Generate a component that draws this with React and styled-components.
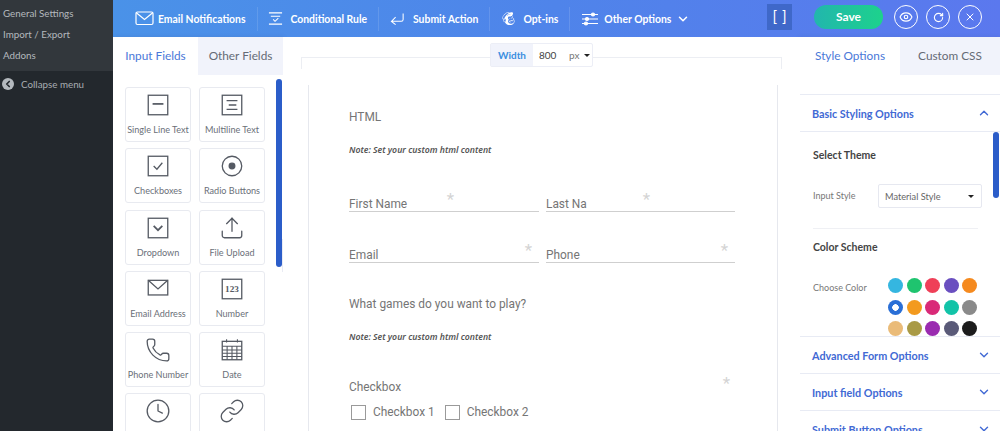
import React from 'react';
import styled, { createGlobalStyle } from 'styled-components';
import { FaMailchimp } from 'react-icons/fa';
import { ChevronDown, ChevronUp, ChevronLeft, Eye, RotateCw, X, Phone, Clock, Link, Upload } from 'lucide-react';

const Glyph = ({ children }) => (
  <svg viewBox="0 0 24 24" fill="none" stroke="currentColor" strokeWidth="1.2">
    {children}
  </svg>
);

const fieldCards = [
  { id: 'single', label: 'Single Line Text', icon: <Glyph><rect x="3" y="3" width="18" height="18" /><path d="M7 11h10" strokeWidth="1.6" /></Glyph> },
  { id: 'multi', label: 'Multiline Text', icon: <Glyph><rect x="3" y="3" width="18" height="18" /><path d="M7 8h10M9 12h7M7 16h10" /></Glyph> },
  { id: 'check', label: 'Checkboxes', icon: <Glyph><rect x="3" y="3" width="18" height="18" /><path d="M8 12l3 3 5-6" /></Glyph> },
  { id: 'radio', label: 'Radio Buttons', icon: <Glyph><circle cx="12" cy="12" r="9" /><circle cx="12" cy="12" r="2.6" fill="currentColor" /></Glyph> },
  { id: 'drop', label: 'Dropdown', icon: <Glyph><rect x="3" y="3" width="18" height="18" /><path d="M8 10l4 4 4-4" strokeWidth="1.6" /></Glyph> },
  { id: 'file', label: 'File Upload', icon: <Upload strokeWidth={1.2} /> },
  { id: 'email', label: 'Email Address', icon: <Glyph><rect x="3" y="4" width="18" height="13.500" /><path d="M3 4l9 8 9-8" /></Glyph> },
  { id: 'number', label: 'Number', icon: <Glyph><rect x="3" y="3" width="18" height="18" /><text x="12" y="15" fontSize="8.500" fontWeight="700" textAnchor="middle" fill="currentColor" stroke="none" fontFamily="Liberation Serif, serif">123</text></Glyph> },
  { id: 'phone', label: 'Phone Number', icon: <Phone strokeWidth={1.2} /> },
  { id: 'date', label: 'Date', icon: <Glyph><rect x="3" y="4" width="18" height="17" /><path d="M3 8.500h18M7 2v3M17 2v3M3 12h18M3 15h18M3 18h18M7.500 9v12M12 9v12M16.500 9v12" strokeWidth="1" /></Glyph> },
  { id: 'time', icon: <Clock strokeWidth={1.2} /> },
  { id: 'link', icon: <Link strokeWidth={1.2} /> },
];

const swatches = [
  '#35b6e0', '#1fc46f', '#ef4058', '#6a4fc0', '#f58a1f',
  '#2a6fd6', '#f39a1e', '#d92a78', '#12c3a8', '#8a8a8a',
  '#eabb78', '#a99a45', '#9a2bb0', '#5a5a78', '#1c1c1c',
];

const App = () => {
  return (
    <Page>
      <GlobalStyle />
      <WpMenu>
        <SubMenu>
          <SubItem>General Settings</SubItem>
          <SubItem>Import / Export</SubItem>
          <SubItem>Addons</SubItem>
        </SubMenu>
        <Collapse>
          <CollapseDot><ChevronLeft size={10} strokeWidth={4} /></CollapseDot>
          Collapse menu
        </Collapse>
      </WpMenu>

      <Builder>
        <TopBar>
          <TopItem $gap={4} $space={10}>
            <svg width="19" height="15" viewBox="0 0 19 15" fill="none" stroke="currentColor" strokeWidth="1.2"><rect x="1" y="1" width="17" height="12.500" rx="1.500" /><path d="M1 1.500l8.500 7 8.500-7" /></svg>
            Email Notifications
          </TopItem>
          <TopItem>
            <svg width="15" height="15" viewBox="0 0 16 15" fill="none" stroke="currentColor" strokeWidth="1.1"><path d="M1 1.500h14M3 5h10M1 13.500h14M5.500 8.500l2 2 3.500-3.500" /></svg>
            Conditional Rule
          </TopItem>
          <TopItem>
            <svg width="15" height="14" viewBox="0 0 16 14" fill="none" stroke="currentColor" strokeWidth="1.1"><path d="M14 1v6.500a2 2 0 0 1-2 2H2M6 5L1.500 9.500 6 13" /></svg>
            Submit Action
          </TopItem>
          <TopItem $gap={7}>
            <FaMailchimp size={15} />
            Opt-ins
          </TopItem>
          <TopItem $gap={5} $last>
            <svg width="18" height="14" viewBox="0 0 18 14" fill="none" stroke="currentColor" strokeWidth="1.2"><path d="M1 2.500h16M1 7h16M1 11.500h16" /><circle cx="12" cy="2.500" r="1.500" fill="currentColor" /><circle cx="6" cy="7" r="1.500" fill="currentColor" /><circle cx="5" cy="11.500" r="1.500" fill="currentColor" /></svg>
            Other Options
            <ChevronDown size={14} strokeWidth={2.6} />
          </TopItem>
          <BracketButton>[ ]</BracketButton>
          <SaveButton>Save</SaveButton>
          <RoundButton><Eye size={14} /></RoundButton>
          <RoundButton><RotateCw size={11} strokeWidth={2.4} /></RoundButton>
          <RoundButton $last><X size={12} /></RoundButton>
        </TopBar>

        <Workspace>
          <LeftPanel>
            <Tabs>
              <Tab $active>Input Fields</Tab>
              <Tab>Other Fields</Tab>
            </Tabs>
            <CardGrid>
              {fieldCards.map((card) => (
                <Card key={card.id}>
                  <CardIcon>{card.icon}</CardIcon>
                  {card.label && <CardLabel>{card.label}</CardLabel>}
                </Card>
              ))}
            </CardGrid>
            <LeftScroll />
            <PanelToggle><ChevronLeft size={11} strokeWidth={2.6} /></PanelToggle>
          </LeftPanel>

          <Canvas>
            <WidthControl>
              <WidthLabel>Width</WidthLabel>
              <WidthValue>800</WidthValue>
              <WidthUnit>px<Caret /></WidthUnit>
            </WidthControl>
            <OuterFrame />
            <FormSheet>
              <FieldTitle>HTML</FieldTitle>
              <Note>Note: Set your custom html content</Note>
              <FieldRow $top={38}>
                <Underlined>First Name<Star $right={85}>*</Star></Underlined>
                <Underlined>Last Na<Star $right={85}>*</Star></Underlined>
              </FieldRow>
              <FieldRow $top={33}>
                <Underlined>Email<Star $right={7}>*</Star></Underlined>
                <Underlined>Phone<Star $right={7}>*</Star></Underlined>
              </FieldRow>
              <Question>What games do you want to play?</Question>
              <Note>Note: Set your custom html content</Note>
              <CheckboxBlock>
                <FieldTitle>Checkbox</FieldTitle>
                <Star $right={5} $top={-5}>*</Star>
                <CheckRow>
                  <CheckItem><Box />Checkbox 1</CheckItem>
                  <CheckItem><Box />Checkbox 2</CheckItem>
                </CheckRow>
              </CheckboxBlock>
            </FormSheet>
          </Canvas>

          <RightPanel>
            <Tabs>
              <Tab $active>Style Options</Tab>
              <Tab>Custom CSS</Tab>
            </Tabs>
            <RightSpacer />
            <SectionHead>Basic Styling Options<ChevronUp size={14} strokeWidth={2.4} /></SectionHead>
            <SectionBody>
              <BodyTitle>Select Theme</BodyTitle>
              <OptionRow>
                <OptionLabel>Input Style</OptionLabel>
                <SelectBox>Material Style<Caret /></SelectBox>
              </OptionRow>
              <Divider />
              <BodyTitle>Color Scheme</BodyTitle>
              <ColorRow>
                <OptionLabel>Choose Color</OptionLabel>
                <Swatches>
                  {swatches.map((color, i) => <Swatch key={color} $color={color} $selected={i === 5} />)}
                </Swatches>
              </ColorRow>
              <RightScroll />
            </SectionBody>
            <SectionHead>Advanced Form Options<ChevronDown size={14} strokeWidth={2.4} /></SectionHead>
            <SectionHead>Input field Options<ChevronDown size={14} strokeWidth={2.4} /></SectionHead>
            <SectionHead>Submit Button Options<ChevronDown size={14} strokeWidth={2.4} /></SectionHead>
          </RightPanel>
        </Workspace>
      </Builder>
    </Page>
  );
};

export default App;

const uiFont = `Lato, "Noto Sans", sans-serif`;
const noteFont = `"Noto Sans", "Open Sans", sans-serif`;

const GlobalStyle = createGlobalStyle`
  html, body {
    margin: 0;
    height: 100%;
    overflow: hidden;
    background: #fff;
  }
  * {
    box-sizing: border-box;
  }
`;

const Page = styled.div`
  display: flex;
  width: 1000px;
  height: 431px;
  overflow: hidden;
  font-family: ${uiFont};
`;

const WpMenu = styled.div`
  width: 113px;
  flex: none;
  background: #23282d;
  color: #b4b9be;
`;

const SubMenu = styled.div`
  height: 71px;
  padding-top: 3px;
  background: #32373c;
`;

const SubItem = styled.div`
  height: 21px;
  padding-left: 3px;
  font-size: 9.800px;
  line-height: 21px;
  color: #b4b9be;
`;

const Collapse = styled.div`
  display: flex;
  align-items: center;
  gap: 7px;
  margin-top: 5px;
  padding-left: 2px;
  font-size: 9.800px;
  line-height: 16px;
  color: #a8adb2;
`;

const CollapseDot = styled.span`
  display: flex;
  align-items: center;
  justify-content: center;
  width: 12px;
  height: 12px;
  border-radius: 50%;
  background: #b4b9be;
  color: #23282d;
`;

const Builder = styled.div`
  flex: 1;
  min-width: 0;
  display: flex;
  flex-direction: column;
`;

const TopBar = styled.div`
  height: 37px;
  flex: none;
  display: flex;
  align-items: center;
  padding: 0 18px 0 22px;
  background: linear-gradient(90deg, #4a92e8 0%, #4f84ea 50%, #5b78ee 100%);
  color: #fff;
`;

const TopItem = styled.div`
  display: flex;
  align-items: center;
  gap: ${(p) => p.$gap || 8}px;
  height: 24px;
  padding-right: ${(p) => (p.$last ? '0' : '11px')};
  margin-right: ${(p) => (p.$last ? 0 : p.$space || 11)}px;
  font-size: 10.400px;
  font-weight: 700;
  white-space: nowrap;
  border-right: ${(p) => (p.$last ? 'none' : '1px solid rgba(255, 255, 255, 0.12)')};
`;

const BracketButton = styled.div`
  width: 25px;
  height: 26px;
  margin: -3px 22px 0 auto;
  text-align: center;
  font-size: 15px;
  line-height: 25px;
  word-spacing: 1px;
  background: #3f68c9;
`;

const SaveButton = styled.div`
  width: 69px;
  height: 24px;
  margin: -3px 11px 0 0;
  border-radius: 12px;
  text-align: center;
  font-size: 12px;
  font-weight: 700;
  line-height: 24px;
  background: linear-gradient(90deg, #22b6ad, #1dd28c);
`;

const RoundButton = styled.div`
  display: flex;
  align-items: center;
  justify-content: center;
  width: 24px;
  height: 24px;
  margin: -3px ${(p) => (p.$last ? '0' : '8px')} 0 0;
  border: 1px solid #fff;
  border-radius: 50%;
`;

const Workspace = styled.div`
  flex: 1;
  min-height: 0;
  display: flex;
`;

const LeftPanel = styled.div`
  position: relative;
  width: 170px;
  flex: none;
  box-shadow: 1px 0 4px rgba(60, 70, 110, 0.16);
  background: #fff;
`;

const Tabs = styled.div`
  display: flex;
  height: 38px;
`;

const Tab = styled.div`
  flex: 1;
  text-align: center;
  font-size: 11.800px;
  line-height: 38px;
  white-space: nowrap;
  color: ${(p) => (p.$active ? '#4a78d8' : '#656a75')};
  background: ${(p) => (p.$active ? '#fff' : '#f1f3fb')};
`;

const CardGrid = styled.div`
  display: grid;
  grid-template-columns: 66px 66px;
  grid-auto-rows: 55px;
  gap: 6.300px 8px;
  padding: 12px 0 0 12px;
`;

const Card = styled.div`
  display: flex;
  flex-direction: column;
  align-items: center;
  padding-top: 4px;
  border: 1px solid #e8eaf0;
  border-radius: 3px;
  background: #fff;
  color: #555a63;
`;

const CardIcon = styled.div`
  height: 26px;
  display: flex;
  align-items: center;
  justify-content: center;
  svg {
    width: 26px;
    height: 26px;
  }
`;

const CardLabel = styled.div`
  margin-top: 6px;
  font-size: 9.100px;
  line-height: 12px;
  white-space: nowrap;
  color: #6b7079;
`;

const LeftScroll = styled.div`
  position: absolute;
  top: 42px;
  right: 1px;
  width: 6px;
  height: 188px;
  border-radius: 3px;
  background: #2b5dc9;
`;

const PanelToggle = styled.div`
  position: absolute;
  top: 202px;
  right: -10px;
  width: 11px;
  height: 33px;
  display: flex;
  align-items: center;
  justify-content: center;
  border-radius: 0 3px 3px 0;
  background: #e9ebf3;
  color: #4c5563;
`;

const Canvas = styled.div`
  position: relative;
  flex: 1;
  min-width: 0;
  padding: 48px 22px 0 25px;
  background: #fff;
`;

const WidthControl = styled.div`
  position: absolute;
  top: 6px;
  left: 207px;
  z-index: 2;
  display: flex;
  align-items: center;
  width: 103px;
  height: 24px;
  border: 1px solid #eceef6;
  border-radius: 2px;
  background: #fff;
  font-size: 10px;
`;

const WidthLabel = styled.span`
  width: 42px;
  height: 100%;
  text-align: center;
  line-height: 22px;
  font-weight: 700;
  color: #3a8ee0;
  background: #f1f3fb;
`;

const WidthValue = styled.span`
  width: 36px;
  padding-left: 6px;
  color: #444;
`;

const WidthUnit = styled.span`
  display: flex;
  align-items: center;
  gap: 5px;
  color: #777;
`;

const Caret = styled.i`
  width: 0;
  height: 0;
  border: 3px solid transparent;
  border-top: 3px solid #222;
  border-bottom: 0;
`;

const OuterFrame = styled.div`
  position: absolute;
  top: 20px;
  left: 18px;
  width: 481px;
  height: 12px;
  border: 1px solid #eceef3;
  border-bottom: 0;
`;

const FormSheet = styled.div`
  width: 470px;
  height: 346px;
  padding: 25px 42px 0 40px;
  border-left: 1px solid #e6e8ee;
  border-right: 1px solid #e6e8ee;
  font-family: Roboto, sans-serif;
  color: #757575;
`;

const FieldTitle = styled.div`
  font-size: 11.900px;
  line-height: 15px;
`;

const Note = styled.div`
  margin-top: 19px;
  font-family: ${noteFont};
  font-size: 8.700px;
  font-style: italic;
  font-weight: 600;
  line-height: 12px;
  color: #555;
`;

const FieldRow = styled.div`
  display: grid;
  grid-template-columns: 190px 189px;
  gap: 7px;
  margin-top: ${(p) => p.$top}px;
`;

const Underlined = styled.div`
  position: relative;
  height: 18px;
  border-bottom: 1px solid #cfcfcf;
  font-size: 11.900px;
  line-height: 21px;
`;

const Star = styled.span`
  position: absolute;
  top: ${(p) => (p.$top === undefined ? -3 : p.$top)}px;
  right: ${(p) => p.$right}px;
  font-size: 17px;
  line-height: 17px;
  color: #d4d4d4;
`;

const Question = styled.div`
  margin-top: 34px;
  font-size: 11.900px;
  line-height: 15px;
`;

const CheckboxBlock = styled.div`
  position: relative;
  margin-top: 37px;
`;

const CheckRow = styled.div`
  display: flex;
  gap: 10px;
  margin-top: 10px;
  padding-left: 2px;
`;

const CheckItem = styled.div`
  display: flex;
  align-items: center;
  gap: 7px;
  font-size: 11.900px;
  line-height: 15px;
`;

const Box = styled.span`
  width: 15px;
  height: 15px;
  border: 1px solid #9a9a9a;
`;

const RightPanel = styled.div`
  width: 200px;
  flex: none;
  display: flex;
  flex-direction: column;
  box-shadow: -1px 0 4px rgba(60, 70, 110, 0.14);
  background: #fff;
`;

const RightSpacer = styled.div`
  height: 19px;
  flex: none;
`;

const SectionHead = styled.div`
  height: 37px;
  flex: none;
  display: flex;
  align-items: center;
  justify-content: space-between;
  padding: 0 9px 0 12px;
  border-top: 1px solid #e8ebf4;
  font-size: 10.800px;
  font-weight: 700;
  color: #4169d4;
`;

const SectionBody = styled.div`
  position: relative;
  height: 205px;
  flex: none;
  overflow: hidden;
  padding: 17px 0 0 13px;
  border-top: 1px solid #e8ebf4;
`;

const BodyTitle = styled.div`
  font-size: 10.500px;
  font-weight: 700;
  line-height: 13px;
  color: #444;
`;

const OptionRow = styled.div`
  display: flex;
  align-items: center;
  margin-top: 22px;
`;

const OptionLabel = styled.div`
  width: 65px;
  font-size: 9px;
  line-height: 12px;
  color: #777;
`;

const SelectBox = styled.div`
  display: flex;
  align-items: center;
  justify-content: space-between;
  width: 104px;
  height: 24px;
  padding: 0 7px 0 6px;
  border: 1px solid #e6e8f0;
  border-radius: 2px;
  font-size: 9.200px;
  color: #666;
`;

const Divider = styled.div`
  width: 165px;
  height: 1px;
  margin: 20px 0 12px;
  background: #eff0f4;
`;

const ColorRow = styled.div`
  display: flex;
  margin-top: 28px;
`;

const Swatches = styled.div`
  display: grid;
  grid-template-columns: repeat(5, 15px);
  grid-auto-rows: 15px;
  gap: 6.500px 3.500px;
  margin: -4px 0 0 10px;
`;

const Swatch = styled.span`
  border-radius: 50%;
  background: ${(p) => (p.$selected
    ? `radial-gradient(circle, #fff 0 3px, ${p.$color} 3.5px)`
    : p.$color)};
`;

const RightScroll = styled.div`
  position: absolute;
  top: 0;
  right: 1px;
  width: 6px;
  height: 66px;
  border-radius: 3px;
  background: #2b5dc9;
`;
